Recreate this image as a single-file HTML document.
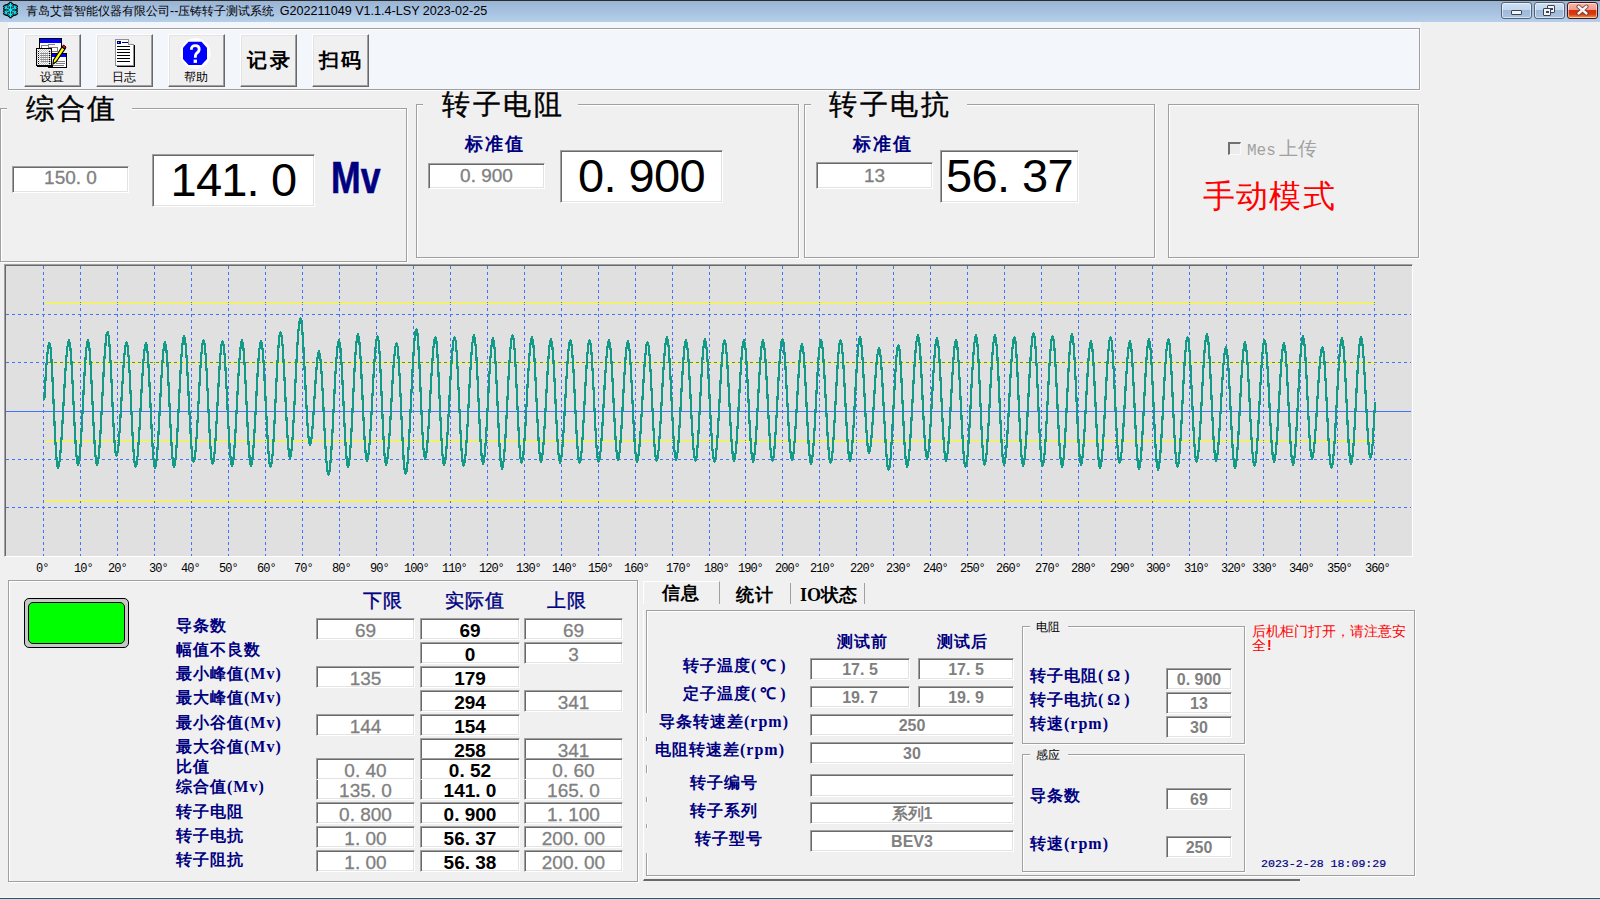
<!DOCTYPE html><html><head><meta charset="utf-8"><title>app</title><style>
*{margin:0;padding:0;box-sizing:border-box}
html,body{width:1600px;height:900px;overflow:hidden;background:#f0f0f0;font-family:"Liberation Sans",sans-serif;position:relative;color:#000}
.a{position:absolute;white-space:nowrap}
.grp{position:absolute;border:1px solid #a0a0a0;box-shadow:inset 1px 1px 0 #fff,1px 1px 0 #fff}
.ed{position:absolute;background:#fff;border-top:1px solid #a0a0a0;border-left:1px solid #a0a0a0;border-right:1px solid #fff;border-bottom:1px solid #fff;box-shadow:inset 1px 1px 0 #696969,inset -1px -1px 0 #e3e3e3;text-align:center;white-space:nowrap;overflow:hidden}
.btn{position:absolute;background:#f0f0f0;border-top:1px solid #fff;border-left:1px solid #fff;border-right:1px solid #696969;border-bottom:1px solid #696969;box-shadow:inset -1px -1px 0 #a0a0a0,inset 1px 1px 0 #e3e3e3}
.lbl{position:absolute;white-space:nowrap;color:#000080;font-weight:bold;font-size:16px;line-height:16px;letter-spacing:1px}
.gt{position:absolute;background:#f0f0f0;white-space:nowrap}
.gv{color:#808080;-webkit-text-stroke:0.3px #808080}
.bk{color:#000;font-weight:bold}
.sf{font-family:'Liberation Serif',serif}
</style></head><body>
<div class="a" style="left:0;top:0;width:1600px;height:22px;background:linear-gradient(#98b2d3,#a9c3e2 60%,#b6cfea)"></div>
<div class="a" style="left:0;top:0;width:1600px;height:1px;background:#2b2b2b"></div>
<svg class="a" style="left:0;top:0" width="22" height="22" viewBox="0 0 22 22">
<g fill="none" stroke="#000" stroke-width="2.5" stroke-linecap="square">
<path d="M10.5 3V17M4.4 6.5L16.6 13.5M4.4 13.5L16.6 6.5"/>
<path d="M8.5 4.5L10.5 6.5L12.5 4.5M8.5 15.5L10.5 13.5L12.5 15.5M4.5 9L6.5 8L6 5.5M16.5 9L14.5 8L15 5.5M4.5 11L6.5 12L6 14.5M16.5 11L14.5 12L15 14.5"/>
</g>
<g fill="none" stroke="#00f0ff" stroke-width="1.3">
<path d="M10.5 3V17M4.4 6.5L16.6 13.5M4.4 13.5L16.6 6.5"/>
<path d="M8.5 4.5L10.5 6.5L12.5 4.5M8.5 15.5L10.5 13.5L12.5 15.5M4.5 9L6.5 8L6 5.5M16.5 9L14.5 8L15 5.5M4.5 11L6.5 12L6 14.5M16.5 11L14.5 12L15 14.5"/>
</g>

</svg>
<div class="a" style="left:26px;top:4px;font-size:12.4px;line-height:14px;color:#000">青岛艾普智能仪器有限公司--压铸转子测试系统<span style="font-size:12.6px;padding-left:2px"> G202211049 V1.1.4-LSY 2023-02-25</span></div>
<div class="a" style="left:1501px;top:2px;width:31px;height:17px;border:1px solid #53627a;border-radius:3px;background:linear-gradient(#cfe0f3 0%,#c2d6ee 45%,#9fb9d8 50%,#a9c2e0 100%);box-shadow:inset 0 0 0 1px rgba(255,255,255,.55)"></div>
<div class="a" style="left:1534px;top:2px;width:31px;height:17px;border:1px solid #53627a;border-radius:3px;background:linear-gradient(#cfe0f3 0%,#c2d6ee 45%,#9fb9d8 50%,#a9c2e0 100%);box-shadow:inset 0 0 0 1px rgba(255,255,255,.55)"></div>
<div class="a" style="left:1567px;top:2px;width:31px;height:17px;border:1px solid #4a1018;border-radius:3px;background:linear-gradient(#f6b8a8 0%,#ee9a88 45%,#d8300c 50%,#d83a10 75%,#eaa050 100%);box-shadow:inset 0 0 0 1px rgba(255,255,255,.55)"></div>
<div class="a" style="left:1511px;top:10px;width:11px;height:5px;background:#f4f4f4;border:1px solid #3a4458;border-radius:1px"></div>
<div class="a" style="left:1547px;top:5px;width:8px;height:8px;border-radius:1px;background:#f4f4f4;border:1px solid #3a4458"><div style="margin:2px 0 0 2px;width:3px;height:2px;border:1px solid #3a4458"></div></div>
<div class="a" style="left:1543px;top:8px;width:8px;height:8px;border-radius:1px;background:#f4f4f4;border:1px solid #3a4458"><div style="margin:2px 0 0 2px;width:3px;height:2px;border:1px solid #3a4458"></div></div>
<svg class="a" style="left:1575px;top:4px" width="15" height="12" viewBox="0 0 15 12"><path d="M3.5 2.5L11.5 9.5M11.5 2.5L3.5 9.5" stroke="#6a3030" stroke-width="4" stroke-linecap="round"/><path d="M3.5 2.5L11.5 9.5M11.5 2.5L3.5 9.5" stroke="#f4f4f4" stroke-width="2.4" stroke-linecap="round"/></svg>
<div class="a" style="left:8px;top:22px;width:1413px;height:69px;background:#f3f6fb"></div>
<div class="grp" style="left:8px;top:28px;width:1412px;height:62px"></div>
<div class="btn" style="left:24px;top:34px;width:57px;height:53px"></div>
<div class="btn" style="left:96px;top:34px;width:57px;height:53px"></div>
<div class="btn" style="left:168px;top:34px;width:57px;height:53px"></div>
<div class="btn" style="left:240px;top:34px;width:57px;height:53px"></div>
<div class="btn" style="left:312px;top:34px;width:57px;height:53px"></div>
<svg class="a" style="left:36px;top:37px" width="32" height="32" viewBox="0 0 32 32" shape-rendering="crispEdges">
<rect x="3.5" y="1.5" width="22" height="15" fill="#fff" stroke="#000"/>
<rect x="4" y="2" width="21" height="4" fill="#0000ff"/>
<rect x="5.5" y="8.5" width="7" height="4" fill="none" stroke="#808080"/>
<rect x="12" y="7" width="7" height="1" fill="#808080"/><rect x="13.5" y="10.5" width="8" height="4" fill="none" stroke="#808080"/>
<rect x="12.5" y="16.5" width="18" height="14" fill="#fff" stroke="#000"/>
<rect x="13" y="17" width="17" height="3" fill="#0000ff"/>
<rect x="20" y="24" width="9" height="1" fill="#808080"/><rect x="20" y="26" width="9" height="1" fill="#808080"/><rect x="15" y="28" width="13" height="1" fill="#808080"/>
<rect x="1" y="28" width="16" height="2" fill="#000"/>
<defs><pattern id="chk" x="0" y="0" width="2" height="2" patternUnits="userSpaceOnUse"><rect width="2" height="2" fill="#fff"/><rect width="1" height="1" fill="#c0c0c0"/><rect x="1" y="1" width="1" height="1" fill="#c0c0c0"/></pattern></defs><rect x="0.5" y="11.5" width="15" height="17" fill="url(#chk)" stroke="#000"/>
<g fill="#000"><rect x="2" y="14" width="1" height="1"/><rect x="2" y="16" width="1" height="1"/><rect x="2" y="18" width="1" height="1"/><rect x="2" y="20" width="1" height="1"/><rect x="2" y="22" width="1" height="1"/><rect x="2" y="24" width="1" height="1"/><rect x="2" y="26" width="1" height="1"/>
<rect x="13" y="14" width="1" height="1"/><rect x="13" y="16" width="1" height="1"/><rect x="13" y="18" width="1" height="1"/><rect x="13" y="20" width="1" height="1"/><rect x="13" y="22" width="1" height="1"/><rect x="13" y="24" width="1" height="1"/><rect x="13" y="26" width="1" height="1"/></g>
<g fill="#909090"><rect x="4" y="16" width="8" height="1"/><rect x="4" y="18" width="8" height="1"/><rect x="4" y="20" width="8" height="1"/><rect x="4" y="22" width="8" height="1"/><rect x="5" y="24" width="7" height="1"/></g>
</svg>
<svg class="a" style="left:36px;top:37px" width="32" height="32" viewBox="0 0 32 32">
<path d="M26 10 L29 12 L20 25 L17 27 L17.5 23 Z" fill="#ffff00" stroke="#000" stroke-width="1.2"/>
<path d="M26 10 L29 12 L30 10 L27.5 8 Z" fill="#ff0000" stroke="#000" stroke-width="1"/>
</svg>
<div class="a" style="left:40px;top:71px;font-size:12px;line-height:13px">设置</div>
<svg class="a" style="left:114px;top:38px" width="22" height="30" viewBox="0 0 22 30" shape-rendering="crispEdges">
<path d="M3 29H21V8L20 7V28H3Z" fill="#000"/><rect x="19" y="7" width="2" height="22" fill="#000"/><rect x="3" y="27" width="18" height="2" fill="#000"/>
<path d="M1.5 1.5 H14.5 L19.5 6.5 V27.5 H1.5 Z" fill="#fff" stroke="#909090"/>
<path d="M14.5 1.5 V6.5 H19.5" fill="#e8e8e8" stroke="#909090"/>
<rect x="3" y="3" width="4" height="3" rx="1" fill="#000080"/><rect x="4" y="4" width="1" height="1" fill="#00ffff"/><rect x="8" y="4" width="6" height="1" fill="#000080"/>
<g fill="#000"><rect x="3" y="8" width="13" height="1"/><rect x="3" y="11" width="13" height="1"/><rect x="3" y="14" width="13" height="1"/><rect x="3" y="17" width="13" height="1"/><rect x="3" y="20" width="13" height="1"/><rect x="3" y="23" width="13" height="1"/></g>
</svg>
<div class="a" style="left:112px;top:71px;font-size:12px;line-height:13px">日志</div>
<svg class="a" style="left:180px;top:38px" width="31" height="31" viewBox="0 0 31 31">
<circle cx="15.5" cy="15.5" r="15.2" fill="#fff"/>
<path d="M8.5 3.8 H21.5 L27 9.8 V21 L21.5 27 H8.5 L3 21 V9.8 Z" fill="#0000ff"/>
<path d="M11.4 11.8 Q11.2 7.6 15.3 7.6 Q19.2 7.6 19.2 11 Q19.2 13.6 16.9 15 Q15.3 16 15.3 19.8" fill="none" stroke="#fff" stroke-width="2.8"/>
<rect x="13.6" y="21.6" width="3.4" height="3.3" fill="#fff"/>
</svg>
<div class="a" style="left:184px;top:71px;font-size:12px;line-height:13px">帮助</div>
<div class="a" style="left:247px;top:50px;font-size:20px;line-height:20px;font-weight:bold;letter-spacing:2.5px;font-family:'Liberation Serif',serif">记录</div>
<div class="a" style="left:319px;top:50px;font-size:20px;line-height:20px;font-weight:bold;letter-spacing:1.5px;font-family:'Liberation Serif',serif">扫码</div>
<div class="grp" style="left:0;top:108px;width:407px;height:154px"></div>
<div class="grp" style="left:416px;top:104px;width:383px;height:154px"></div>
<div class="grp" style="left:804px;top:104px;width:351px;height:154px"></div>
<div class="grp" style="left:1168px;top:104px;width:251px;height:154px"></div>
<div class="gt" style="left:7px;top:100px;width:125px;height:16px;"></div>
<div class="a" style="left:26px;top:94px;font-size:28px;line-height:30px;letter-spacing:2.5px;-webkit-text-stroke:0.4px #000">综合值</div>
<div class="gt" style="left:423px;top:96px;width:155px;height:16px;"></div>
<div class="a" style="left:442px;top:90px;font-size:28px;line-height:30px;letter-spacing:2.5px;-webkit-text-stroke:0.4px #000">转子电阻</div>
<div class="gt" style="left:811px;top:96px;width:156px;height:16px;"></div>
<div class="a" style="left:829px;top:90px;font-size:28px;line-height:30px;letter-spacing:2.6px;-webkit-text-stroke:0.4px #000">转子电抗</div>
<div class="ed gv" style="left:12px;top:166px;width:117px;height:27px;font-size:19px;line-height:21px">150.&nbsp;0</div>
<div class="ed" style="left:152px;top:154px;width:163px;height:53px;font-size:47px;line-height:50px;letter-spacing:-0.8px">141.&nbsp;0</div>
<div class="a" style="left:331px;top:156px;font-size:44px;line-height:44px;font-weight:bold;color:#000080;-webkit-text-stroke:0.6px #000080;transform:scaleX(0.81);transform-origin:0 0">Mv</div>
<div class="lbl" style="left:465px;top:135px;font-size:18px;line-height:18px;letter-spacing:2px">标准值</div>
<div class="ed gv" style="left:428px;top:163px;width:117px;height:26px;font-size:19px;line-height:24px">0.&nbsp;900</div>
<div class="ed" style="left:560px;top:150px;width:163px;height:53px;font-size:47px;line-height:50px;letter-spacing:-0.6px">0.&nbsp;900</div>
<div class="lbl" style="left:853px;top:135px;font-size:18px;line-height:18px;letter-spacing:2px">标准值</div>
<div class="ed gv" style="left:816px;top:162px;width:117px;height:27px;font-size:19px;line-height:25px">13</div>
<div class="ed" style="left:940px;top:150px;width:139px;height:53px;font-size:47px;line-height:50px;letter-spacing:-0.6px;text-align:left;padding-left:5px">56.&nbsp;37</div>
<div class="a" style="left:1228px;top:142px;width:13px;height:13px;border-top:2px solid #707070;border-left:2px solid #707070;border-right:1px solid #fafafa;border-bottom:1px solid #fafafa;background:#ececec"></div>
<div class="a" style="left:1247px;top:141px;font-size:16px;line-height:20px;color:#a0a0a0;font-family:'Liberation Mono',monospace">Mes<span style="font-size:18.5px;letter-spacing:0.5px;margin-left:3px">上传</span></div>
<div class="a" style="left:1203px;top:179px;font-size:32px;line-height:34px;letter-spacing:1.2px;color:#ff0000">手动模式</div>
<div class="a" style="left:4px;top:264px;width:1409px;height:293px;background:#e0e0e0;border-top:1px solid #a0a0a0;border-left:1px solid #a0a0a0;border-right:1px solid #fff;border-bottom:1px solid #fff;box-shadow:inset 1px 1px 0 #696969"></div>
<svg class="a" style="left:0;top:0" width="1600" height="900" viewBox="0 0 1600 900"><g stroke="#4173ff" stroke-width="1" shape-rendering="crispEdges" stroke-dasharray="3,3"><path d="M43.5 266V556"/><path d="M80.5 266V556"/><path d="M117.5 266V556"/><path d="M154.5 266V556"/><path d="M191.5 266V556"/><path d="M228.5 266V556"/><path d="M265.5 266V556"/><path d="M302.5 266V556"/><path d="M339.5 266V556"/><path d="M376.5 266V556"/><path d="M413.5 266V556"/><path d="M450.5 266V556"/><path d="M487.5 266V556"/><path d="M524.5 266V556"/><path d="M561.5 266V556"/><path d="M598.5 266V556"/><path d="M635.5 266V556"/><path d="M672.5 266V556"/><path d="M709.5 266V556"/><path d="M745.5 266V556"/><path d="M782.5 266V556"/><path d="M819.5 266V556"/><path d="M856.5 266V556"/><path d="M893.5 266V556"/><path d="M930.5 266V556"/><path d="M967.5 266V556"/><path d="M1004.5 266V556"/><path d="M1041.5 266V556"/><path d="M1078.5 266V556"/><path d="M1115.5 266V556"/><path d="M1152.5 266V556"/><path d="M1189.5 266V556"/><path d="M1226.5 266V556"/><path d="M1263.5 266V556"/><path d="M1300.5 266V556"/><path d="M1337.5 266V556"/><path d="M1374.5 266V556"/><path d="M6 314.5H1411"/><path d="M6 362.5H1411"/><path d="M6 459.5H1411"/><path d="M6 507.5H1411"/></g><path d="M6 411.5H1411" stroke="#4173ff" stroke-width="1" shape-rendering="crispEdges"/><g stroke="#ffff00" stroke-width="1" shape-rendering="crispEdges"><path d="M45 303.5H1375"/><path d="M45 363.5H1375"/><path d="M45 441.5H1375"/><path d="M45 500.5H1375"/></g><path d="M44.3,400.0 L45.3,382.4 L46.3,366.4 L47.4,353.8 L48.4,345.7 L49.4,342.9 L50.4,346.7 L51.3,357.5 L52.3,374.2 L53.2,394.6 L54.2,416.4 L55.1,436.8 L56.1,453.5 L57.0,464.3 L58.0,468.1 L59.0,465.5 L60.0,457.9 L61.0,446.0 L62.0,430.7 L63.0,413.3 L64.0,395.0 L65.0,377.6 L66.0,362.3 L67.0,350.4 L68.0,342.8 L69.0,340.2 L70.0,344.0 L71.0,354.8 L72.0,371.3 L73.0,391.7 L74.0,413.3 L75.0,433.6 L76.0,450.2 L77.0,461.0 L78.0,464.8 L79.0,461.8 L80.0,452.9 L81.0,439.1 L82.0,421.8 L83.0,402.5 L84.0,383.2 L85.0,365.9 L86.0,352.1 L87.0,343.2 L88.0,340.2 L89.0,344.0 L90.0,354.8 L91.0,371.3 L92.0,391.7 L93.0,413.3 L94.0,433.6 L95.0,450.2 L96.0,461.0 L97.0,464.8 L98.0,462.1 L98.9,454.3 L99.9,441.9 L100.9,426.0 L101.8,407.8 L102.8,388.9 L103.7,370.7 L104.7,354.8 L105.7,342.4 L106.6,334.6 L107.6,331.9 L108.6,335.6 L109.6,346.4 L110.6,362.9 L111.6,383.1 L112.5,404.6 L113.5,424.8 L114.5,441.3 L115.5,452.1 L116.5,455.8 L117.5,453.0 L118.5,445.0 L119.5,432.4 L120.5,416.6 L121.5,399.0 L122.6,381.4 L123.6,365.6 L124.6,353.0 L125.6,345.0 L126.6,342.2 L127.6,346.0 L128.6,356.8 L129.6,373.3 L130.6,393.7 L131.6,415.3 L132.6,435.6 L133.6,452.2 L134.6,463.0 L135.6,466.8 L136.6,463.8 L137.7,455.0 L138.7,441.2 L139.8,424.0 L140.8,404.8 L141.8,385.6 L142.9,368.4 L143.9,354.6 L145.0,345.8 L146.0,342.8 L147.0,346.6 L148.0,357.4 L149.0,374.1 L150.0,394.4 L151.0,416.2 L152.0,436.6 L153.0,453.2 L154.0,464.0 L155.0,467.8 L156.0,464.7 L157.0,455.8 L158.0,441.9 L159.0,424.4 L160.0,405.0 L161.0,385.6 L162.0,368.1 L163.0,354.2 L164.0,345.3 L165.0,342.2 L166.0,346.0 L167.0,356.8 L168.0,373.3 L169.0,393.7 L170.0,415.3 L171.0,435.6 L172.0,452.2 L173.0,463.0 L174.0,466.8 L175.0,463.6 L176.0,454.3 L177.0,439.9 L178.0,421.7 L179.0,401.5 L180.0,381.3 L181.0,363.1 L182.0,348.7 L183.0,339.4 L184.0,336.2 L185.0,339.3 L185.9,348.2 L186.9,362.1 L187.8,379.6 L188.8,399.0 L189.8,418.4 L190.7,435.9 L191.7,449.8 L192.6,458.7 L193.6,461.8 L194.6,458.8 L195.6,450.2 L196.6,436.7 L197.6,419.8 L198.6,401.0 L199.6,382.2 L200.6,365.3 L201.6,351.8 L202.6,343.2 L203.6,340.2 L204.6,343.9 L205.6,354.7 L206.6,371.1 L207.6,391.3 L208.6,412.7 L209.6,432.9 L210.6,449.3 L211.6,460.1 L212.6,463.8 L213.6,460.8 L214.6,452.1 L215.6,438.5 L216.6,421.4 L217.6,402.5 L218.6,383.6 L219.6,366.5 L220.6,352.9 L221.6,344.2 L222.6,341.2 L223.6,345.0 L224.7,355.8 L225.7,372.3 L226.8,392.7 L227.8,414.3 L228.9,434.6 L229.9,451.2 L231.0,462.0 L232.0,465.8 L233.0,462.7 L234.0,453.8 L235.0,439.9 L236.0,422.4 L237.0,403.0 L238.0,383.6 L239.0,366.1 L240.0,352.2 L241.0,343.3 L242.0,340.2 L243.0,344.0 L244.0,354.9 L245.0,371.6 L246.0,392.1 L247.0,413.9 L248.0,434.4 L249.0,451.1 L250.0,462.0 L251.0,465.8 L252.0,462.8 L253.0,453.9 L254.0,440.1 L255.0,422.8 L256.0,403.5 L257.0,384.2 L258.0,366.9 L259.0,353.1 L260.0,344.2 L261.0,341.2 L262.0,344.3 L262.9,353.2 L263.9,367.1 L264.8,384.6 L265.8,404.0 L266.8,423.4 L267.7,440.9 L268.7,454.8 L269.6,463.7 L270.6,466.8 L271.6,463.5 L272.6,453.9 L273.6,439.1 L274.6,420.3 L275.6,399.5 L276.6,378.7 L277.6,359.9 L278.6,345.1 L279.6,335.5 L280.6,332.2 L281.6,336.0 L282.7,346.9 L283.7,363.6 L284.8,384.1 L285.8,405.9 L286.9,426.4 L287.9,443.1 L289.0,454.0 L290.0,457.8 L291.0,454.4 L292.1,444.5 L293.1,429.0 L294.2,409.6 L295.2,388.0 L296.2,366.4 L297.3,347.0 L298.3,331.5 L299.4,321.6 L300.4,318.2 L301.4,321.3 L302.3,330.3 L303.3,344.3 L304.2,361.9 L305.2,381.5 L306.2,401.1 L307.1,418.7 L308.1,432.7 L309.0,441.7 L310.0,444.8 L311.0,442.0 L312.0,433.9 L313.0,421.4 L314.0,406.1 L315.0,389.9 L316.0,374.6 L317.0,362.1 L318.0,354.0 L319.0,351.2 L320.0,354.9 L321.1,365.7 L322.1,382.1 L323.2,402.3 L324.2,423.7 L325.3,443.9 L326.3,460.3 L327.4,471.1 L328.4,474.8 L329.4,472.1 L330.3,464.1 L331.3,451.6 L332.3,435.5 L333.2,417.1 L334.2,397.9 L335.1,379.5 L336.1,363.4 L337.1,350.9 L338.0,342.9 L339.0,340.2 L340.0,344.0 L341.0,355.0 L342.0,371.8 L343.0,392.5 L344.0,414.5 L345.0,435.1 L346.0,452.0 L347.0,463.0 L348.0,466.8 L349.0,463.6 L350.0,454.1 L351.0,439.5 L352.0,421.0 L353.0,400.5 L354.0,380.0 L355.0,361.5 L356.0,346.9 L357.0,337.4 L358.0,334.2 L359.0,338.0 L360.0,349.0 L361.0,365.8 L362.0,386.5 L363.0,408.5 L364.0,429.1 L365.0,446.0 L366.0,457.0 L367.0,460.8 L368.0,458.3 L368.9,450.9 L369.9,439.3 L370.9,424.4 L371.8,407.4 L372.8,389.6 L373.7,372.6 L374.7,357.7 L375.7,346.1 L376.6,338.7 L377.6,336.2 L378.7,341.1 L379.7,355.0 L380.8,375.9 L381.8,400.5 L382.9,425.1 L383.9,446.0 L384.9,459.9 L386.0,464.8 L387.0,462.3 L387.9,455.1 L388.9,443.8 L389.9,429.3 L390.8,412.7 L391.8,395.3 L392.7,378.7 L393.7,364.2 L394.7,352.9 L395.6,345.7 L396.6,343.2 L397.6,347.1 L398.6,358.5 L399.6,375.8 L400.6,397.2 L401.6,419.8 L402.6,441.1 L403.6,458.5 L404.6,469.9 L405.6,473.8 L406.6,470.9 L407.6,462.3 L408.5,448.8 L409.5,431.5 L410.5,411.8 L411.5,391.2 L412.5,371.5 L413.5,354.2 L414.4,340.7 L415.4,332.1 L416.4,329.2 L417.4,333.1 L418.3,344.4 L419.3,361.6 L420.2,382.7 L421.2,405.3 L422.1,426.4 L423.1,443.6 L424.0,454.9 L425.0,458.8 L426.0,455.8 L427.1,447.2 L428.1,433.7 L429.2,416.8 L430.2,398.0 L431.2,379.2 L432.3,362.3 L433.3,348.8 L434.4,340.2 L435.4,337.2 L436.4,341.0 L437.3,352.1 L438.3,369.1 L439.2,389.9 L440.2,412.1 L441.1,432.9 L442.1,449.9 L443.0,461.0 L444.0,464.8 L445.0,462.2 L445.9,454.7 L446.9,442.8 L447.9,427.5 L448.8,410.1 L449.8,391.9 L450.7,374.5 L451.7,359.2 L452.7,347.3 L453.6,339.8 L454.6,337.2 L455.6,341.1 L456.6,352.2 L457.6,369.3 L458.6,390.3 L459.6,412.7 L460.6,433.6 L461.6,450.8 L462.6,461.9 L463.6,465.8 L464.6,462.6 L465.7,453.3 L466.7,438.9 L467.8,420.7 L468.8,400.5 L469.8,380.3 L470.9,362.1 L471.9,347.7 L473.0,338.4 L474.0,335.2 L475.0,339.1 L476.0,350.2 L477.0,367.3 L478.0,388.3 L479.0,410.7 L480.0,431.6 L481.0,448.8 L482.0,459.9 L483.0,463.8 L484.0,460.7 L485.0,451.8 L486.0,437.9 L487.0,420.4 L488.0,401.0 L489.0,381.6 L490.0,364.1 L491.0,350.2 L492.0,341.3 L493.0,338.2 L494.0,342.1 L495.0,353.5 L496.0,370.8 L497.0,392.2 L498.0,414.8 L499.0,436.1 L500.0,453.5 L501.0,464.9 L502.0,468.8 L503.0,466.1 L503.9,458.2 L504.9,445.7 L505.9,429.7 L506.8,411.5 L507.8,392.5 L508.7,374.3 L509.7,358.3 L510.7,345.8 L511.6,337.9 L512.6,335.2 L513.6,339.0 L514.6,350.1 L515.6,367.1 L516.6,387.9 L517.6,410.1 L518.6,430.9 L519.6,447.9 L520.6,459.0 L521.6,462.8 L522.6,459.7 L523.7,450.8 L524.7,436.9 L525.8,419.4 L526.8,400.0 L527.8,380.6 L528.9,363.1 L529.9,349.2 L531.0,340.3 L532.0,337.2 L533.0,341.0 L534.0,351.8 L535.0,368.3 L536.0,388.7 L537.0,410.3 L538.0,430.6 L539.0,447.2 L540.0,458.0 L541.0,461.8 L542.0,458.8 L543.0,450.1 L544.0,436.5 L545.0,419.4 L546.0,400.5 L547.0,381.6 L548.0,364.5 L549.0,350.9 L550.0,342.2 L551.0,339.2 L552.0,342.9 L553.0,353.7 L554.0,370.1 L555.0,390.3 L556.0,411.7 L557.0,431.9 L558.0,448.3 L559.0,459.1 L560.0,462.8 L561.0,459.8 L562.1,451.1 L563.1,437.5 L564.2,420.4 L565.2,401.5 L566.2,382.6 L567.3,365.5 L568.3,351.9 L569.4,343.2 L570.4,340.2 L571.4,343.9 L572.4,354.5 L573.5,370.8 L574.5,390.9 L575.5,412.1 L576.5,432.1 L577.6,448.5 L578.6,459.1 L579.6,462.8 L580.6,459.8 L581.6,451.1 L582.6,437.5 L583.6,420.4 L584.6,401.5 L585.6,382.6 L586.6,365.5 L587.6,351.9 L588.6,343.2 L589.6,340.2 L590.6,343.9 L591.6,354.4 L592.6,370.6 L593.6,390.4 L594.6,411.6 L595.6,431.4 L596.6,447.6 L597.6,458.1 L598.6,461.8 L599.6,458.8 L600.7,450.2 L601.7,436.7 L602.8,419.8 L603.8,401.0 L604.8,382.2 L605.9,365.3 L606.9,351.8 L608.0,343.2 L609.0,340.2 L610.0,343.8 L611.0,354.2 L612.0,370.1 L613.0,389.6 L614.0,410.4 L615.0,429.9 L616.0,445.8 L617.0,456.2 L618.0,459.8 L619.0,456.9 L620.0,448.5 L621.0,435.4 L622.0,418.8 L623.0,400.5 L624.0,382.2 L625.0,365.6 L626.0,352.5 L627.0,344.1 L628.0,341.2 L629.0,344.8 L630.0,355.3 L631.0,371.3 L632.0,391.0 L633.0,412.0 L634.0,431.6 L635.0,447.7 L636.0,458.2 L637.0,461.8 L638.0,459.4 L638.9,452.3 L639.9,441.2 L640.9,426.8 L641.8,410.5 L642.8,393.5 L643.7,377.2 L644.7,362.8 L645.7,351.7 L646.6,344.6 L647.6,342.2 L648.6,345.8 L649.6,356.1 L650.6,371.8 L651.6,391.2 L652.6,411.8 L653.6,431.1 L654.6,446.9 L655.6,457.2 L656.6,460.8 L657.6,457.8 L658.7,449.0 L659.7,435.3 L660.8,418.1 L661.8,399.0 L662.8,379.9 L663.9,362.7 L664.9,349.0 L666.0,340.2 L667.0,337.2 L668.0,340.9 L669.0,351.5 L670.0,367.8 L671.0,387.9 L672.0,409.1 L673.0,429.1 L674.0,445.5 L675.0,456.1 L676.0,459.8 L677.0,456.9 L678.0,448.4 L679.0,435.1 L680.0,418.5 L681.0,400.0 L682.0,381.5 L683.0,364.9 L684.0,351.6 L685.0,343.1 L686.0,340.2 L687.0,343.8 L688.1,354.3 L689.1,370.3 L690.2,390.0 L691.2,411.0 L692.3,430.6 L693.3,446.7 L694.4,457.2 L695.4,460.8 L696.4,457.8 L697.3,449.2 L698.3,435.7 L699.2,418.8 L700.2,400.0 L701.2,381.2 L702.1,364.3 L703.1,350.8 L704.0,342.2 L705.0,339.2 L706.0,342.9 L707.1,353.5 L708.1,369.8 L709.2,389.9 L710.2,411.1 L711.3,431.1 L712.3,447.5 L713.4,458.1 L714.4,461.8 L715.4,458.8 L716.4,450.2 L717.5,436.7 L718.5,419.8 L719.5,401.0 L720.5,382.2 L721.5,365.3 L722.6,351.8 L723.6,343.2 L724.6,340.2 L725.6,343.8 L726.7,354.3 L727.7,370.3 L728.8,390.0 L729.8,411.0 L730.9,430.6 L731.9,446.7 L733.0,457.2 L734.0,460.8 L735.0,457.8 L736.0,449.3 L737.0,435.9 L738.0,419.1 L739.0,400.5 L740.0,381.9 L741.0,365.1 L742.0,351.7 L743.0,343.2 L744.0,340.2 L745.0,343.9 L746.0,354.4 L747.0,370.6 L748.0,390.4 L749.0,411.6 L750.0,431.4 L751.0,447.6 L752.0,458.1 L753.0,461.8 L754.0,458.8 L755.0,450.2 L756.0,436.7 L757.0,419.8 L758.0,401.0 L759.0,382.2 L760.0,365.3 L761.0,351.8 L762.0,343.2 L763.0,340.2 L764.0,343.8 L765.1,354.3 L766.1,370.3 L767.2,390.0 L768.2,411.0 L769.3,430.6 L770.3,446.7 L771.4,457.2 L772.4,460.8 L773.4,457.8 L774.4,449.2 L775.4,435.7 L776.4,418.8 L777.4,400.0 L778.4,381.2 L779.4,364.3 L780.4,350.8 L781.4,342.2 L782.4,339.2 L783.4,342.2 L784.3,350.7 L785.3,364.1 L786.2,380.9 L787.2,399.5 L788.2,418.1 L789.1,434.9 L790.1,448.3 L791.0,456.8 L792.0,459.8 L793.0,457.0 L794.0,448.8 L795.0,436.0 L796.0,419.9 L797.0,402.0 L798.0,384.1 L799.0,368.0 L800.0,355.2 L801.0,347.0 L802.0,344.2 L803.0,347.8 L804.0,358.2 L805.0,374.1 L806.0,393.6 L807.0,414.4 L808.0,433.9 L809.0,449.8 L810.0,460.2 L811.0,463.8 L812.0,460.8 L813.0,452.0 L814.0,438.3 L815.0,421.1 L816.0,402.0 L817.0,382.9 L818.0,365.7 L819.0,352.0 L820.0,343.2 L821.0,340.2 L822.0,343.2 L822.9,351.9 L823.9,365.5 L824.8,382.6 L825.8,401.5 L826.8,420.4 L827.7,437.5 L828.7,451.1 L829.6,459.8 L830.6,462.8 L831.6,459.8 L832.6,451.1 L833.6,437.5 L834.6,420.4 L835.6,401.5 L836.6,382.6 L837.6,365.5 L838.6,351.9 L839.6,343.2 L840.6,340.2 L841.6,343.8 L842.7,354.3 L843.7,370.3 L844.8,390.0 L845.8,411.0 L846.9,430.6 L847.9,446.7 L849.0,457.2 L850.0,460.8 L851.0,457.8 L852.0,449.0 L853.0,435.3 L854.0,418.1 L855.0,399.0 L856.0,379.9 L857.0,362.7 L858.0,349.0 L859.0,340.2 L860.0,337.2 L861.0,340.7 L862.0,350.7 L863.0,366.1 L864.0,385.0 L865.0,405.0 L866.0,423.9 L867.0,439.3 L868.0,449.3 L869.0,452.8 L870.0,450.2 L871.0,442.8 L872.0,431.2 L873.0,416.7 L874.0,400.5 L875.0,384.3 L876.0,369.8 L877.0,358.2 L878.0,350.8 L879.0,348.2 L880.0,351.2 L880.9,359.8 L881.9,373.3 L882.8,390.2 L883.8,409.0 L884.8,427.8 L885.7,444.7 L886.7,458.2 L887.6,466.8 L888.6,469.8 L889.6,466.8 L890.6,457.9 L891.5,444.1 L892.5,426.8 L893.5,407.5 L894.5,388.2 L895.5,370.9 L896.4,357.1 L897.4,348.2 L898.4,345.2 L899.4,348.9 L900.3,359.4 L901.3,375.6 L902.2,395.4 L903.2,416.6 L904.1,436.4 L905.1,452.6 L906.0,463.1 L907.0,466.8 L908.0,464.1 L909.0,456.4 L910.0,444.1 L911.0,428.3 L912.0,410.4 L913.0,391.6 L914.0,373.7 L915.0,357.9 L916.0,345.6 L917.0,337.9 L918.0,335.2 L919.0,338.9 L920.0,349.7 L921.0,366.1 L922.0,386.3 L923.0,407.7 L924.0,427.9 L925.0,444.3 L926.0,455.1 L927.0,458.8 L928.0,455.8 L929.0,447.3 L930.0,433.9 L931.0,417.1 L932.0,398.5 L933.0,379.9 L934.0,363.1 L935.0,349.7 L936.0,341.2 L937.0,338.2 L938.0,341.9 L939.0,352.5 L940.0,368.8 L941.0,388.9 L942.0,410.1 L943.0,430.1 L944.0,446.5 L945.0,457.1 L946.0,460.8 L947.0,457.8 L948.0,449.3 L949.0,435.9 L950.0,419.1 L951.0,400.5 L952.0,381.9 L953.0,365.1 L954.0,351.7 L955.0,343.2 L956.0,340.2 L957.0,343.3 L957.9,352.3 L958.9,366.3 L959.8,383.9 L960.8,403.5 L961.8,423.1 L962.7,440.7 L963.7,454.7 L964.6,463.7 L965.6,466.8 L966.6,463.6 L967.7,454.2 L968.7,439.7 L969.8,421.3 L970.8,401.0 L971.8,380.7 L972.9,362.3 L973.9,347.8 L975.0,338.4 L976.0,335.2 L977.0,339.1 L977.9,350.4 L978.9,367.6 L979.8,388.7 L980.8,411.3 L981.7,432.4 L982.7,449.6 L983.6,460.9 L984.6,464.8 L985.6,461.6 L986.7,452.4 L987.7,438.1 L988.8,420.0 L989.8,400.0 L990.8,380.0 L991.9,361.9 L992.9,347.6 L994.0,338.4 L995.0,335.2 L996.0,339.1 L997.0,350.4 L998.0,367.6 L999.0,388.7 L1000.0,411.3 L1001.0,432.4 L1002.0,449.6 L1003.0,460.9 L1004.0,464.8 L1005.0,461.7 L1006.1,452.6 L1007.1,438.5 L1008.2,420.7 L1009.2,401.0 L1010.2,381.3 L1011.3,363.5 L1012.3,349.4 L1013.4,340.3 L1014.4,337.2 L1015.4,341.1 L1016.3,352.2 L1017.3,369.3 L1018.2,390.3 L1019.2,412.7 L1020.1,433.6 L1021.1,450.8 L1022.0,461.9 L1023.0,465.8 L1024.0,463.1 L1024.9,455.3 L1025.9,442.9 L1026.9,427.0 L1027.8,408.9 L1028.8,390.1 L1029.7,372.0 L1030.7,356.1 L1031.7,343.7 L1032.6,335.9 L1033.6,333.2 L1034.6,337.2 L1035.6,348.7 L1036.6,366.3 L1037.6,388.0 L1038.6,411.0 L1039.6,432.6 L1040.6,450.3 L1041.6,461.8 L1042.6,465.8 L1043.6,462.6 L1044.6,453.4 L1045.6,439.1 L1046.6,421.0 L1047.6,401.0 L1048.6,381.0 L1049.6,362.9 L1050.6,348.6 L1051.6,339.4 L1052.6,336.2 L1053.6,340.1 L1054.7,351.5 L1055.7,368.8 L1056.8,390.2 L1057.8,412.8 L1058.9,434.1 L1059.9,451.5 L1061.0,462.9 L1062.0,466.8 L1063.0,463.6 L1064.0,454.1 L1065.0,439.5 L1066.0,421.0 L1067.0,400.5 L1068.0,380.0 L1069.0,361.5 L1070.0,346.9 L1071.0,337.4 L1072.0,334.2 L1073.0,338.1 L1074.0,349.5 L1075.0,366.8 L1076.0,388.2 L1077.0,410.8 L1078.0,432.1 L1079.0,449.5 L1080.0,460.9 L1081.0,464.8 L1082.0,461.8 L1083.0,453.0 L1084.0,439.3 L1085.0,422.1 L1086.0,403.0 L1087.0,383.9 L1088.0,366.7 L1089.0,353.0 L1090.0,344.2 L1091.0,341.2 L1092.0,345.0 L1093.0,356.0 L1094.0,372.8 L1095.0,393.5 L1096.0,415.5 L1097.0,436.1 L1098.0,453.0 L1099.0,464.0 L1100.0,467.8 L1101.0,465.2 L1101.9,457.4 L1102.9,445.3 L1103.9,429.6 L1104.8,411.8 L1105.8,393.2 L1106.7,375.4 L1107.7,359.7 L1108.7,347.6 L1109.6,339.8 L1110.6,337.2 L1111.6,341.0 L1112.6,351.9 L1113.6,368.6 L1114.6,389.1 L1115.6,410.9 L1116.6,431.4 L1117.6,448.1 L1118.6,459.0 L1119.6,462.8 L1120.6,459.8 L1121.7,451.2 L1122.7,437.7 L1123.8,420.8 L1124.8,402.0 L1125.8,383.2 L1126.9,366.3 L1127.9,352.8 L1129.0,344.2 L1130.0,341.2 L1131.0,345.0 L1132.0,356.1 L1133.0,373.1 L1134.0,393.9 L1135.0,416.1 L1136.0,436.9 L1137.0,453.9 L1138.0,465.0 L1139.0,468.8 L1140.0,465.6 L1141.0,456.4 L1142.0,442.1 L1143.0,424.0 L1144.0,404.0 L1145.0,384.0 L1146.0,365.9 L1147.0,351.6 L1148.0,342.4 L1149.0,339.2 L1150.0,343.1 L1151.0,354.5 L1152.0,371.8 L1153.0,393.2 L1154.0,415.8 L1155.0,437.1 L1156.0,454.5 L1157.0,465.9 L1158.0,469.8 L1159.0,466.6 L1160.1,457.3 L1161.1,442.9 L1162.2,424.7 L1163.2,404.5 L1164.2,384.3 L1165.3,366.1 L1166.3,351.7 L1167.4,342.4 L1168.4,339.2 L1169.4,343.0 L1170.4,354.1 L1171.4,371.1 L1172.4,391.9 L1173.4,414.1 L1174.4,434.9 L1175.4,451.9 L1176.4,463.0 L1177.4,466.8 L1178.4,463.6 L1179.4,454.4 L1180.5,440.1 L1181.5,422.0 L1182.5,402.0 L1183.5,382.0 L1184.5,363.9 L1185.6,349.6 L1186.6,340.4 L1187.6,337.2 L1188.6,341.0 L1189.6,351.8 L1190.6,368.3 L1191.6,388.7 L1192.6,410.3 L1193.6,430.6 L1194.6,447.2 L1195.6,458.0 L1196.6,461.8 L1197.6,458.7 L1198.7,449.6 L1199.7,435.5 L1200.8,417.7 L1201.8,398.0 L1202.8,378.3 L1203.9,360.5 L1204.9,346.4 L1206.0,337.3 L1207.0,334.2 L1208.0,338.0 L1209.0,349.0 L1210.0,365.8 L1211.0,386.5 L1212.0,408.5 L1213.0,429.1 L1214.0,446.0 L1215.0,457.0 L1216.0,460.8 L1217.0,458.0 L1218.0,450.0 L1219.0,437.4 L1220.0,421.6 L1221.0,404.0 L1222.0,386.4 L1223.0,370.6 L1224.0,358.0 L1225.0,350.0 L1226.0,347.2 L1227.0,350.8 L1228.0,361.3 L1229.0,377.3 L1230.0,397.0 L1231.0,418.0 L1232.0,437.6 L1233.0,453.7 L1234.0,464.2 L1235.0,467.8 L1236.0,464.7 L1237.0,455.8 L1238.0,441.9 L1239.0,424.4 L1240.0,405.0 L1241.0,385.6 L1242.0,368.1 L1243.0,354.2 L1244.0,345.3 L1245.0,342.2 L1246.0,345.9 L1247.1,356.7 L1248.1,373.1 L1249.2,393.3 L1250.2,414.7 L1251.3,434.9 L1252.3,451.3 L1253.4,462.1 L1254.4,465.8 L1255.4,462.7 L1256.4,453.8 L1257.5,439.9 L1258.5,422.4 L1259.5,403.0 L1260.5,383.6 L1261.5,366.1 L1262.6,352.2 L1263.6,343.3 L1264.6,340.2 L1265.6,343.9 L1266.7,354.4 L1267.7,370.6 L1268.8,390.4 L1269.8,411.6 L1270.9,431.4 L1271.9,447.6 L1273.0,458.1 L1274.0,461.8 L1275.0,458.9 L1276.0,450.5 L1277.0,437.4 L1278.0,420.8 L1279.0,402.5 L1280.0,384.2 L1281.0,367.6 L1282.0,354.5 L1283.0,346.1 L1284.0,343.2 L1285.0,346.9 L1286.0,357.4 L1287.0,373.6 L1288.0,393.4 L1289.0,414.6 L1290.0,434.4 L1291.0,450.6 L1292.0,461.1 L1293.0,464.8 L1294.0,461.7 L1295.0,452.5 L1296.0,438.3 L1297.0,420.4 L1298.0,400.5 L1299.0,380.6 L1300.0,362.7 L1301.0,348.5 L1302.0,339.3 L1303.0,336.2 L1304.0,339.9 L1305.0,350.5 L1306.0,366.8 L1307.0,386.9 L1308.0,408.1 L1309.0,428.1 L1310.0,444.5 L1311.0,455.1 L1312.0,458.8 L1313.0,456.1 L1314.1,448.1 L1315.1,435.8 L1316.2,420.2 L1317.2,403.0 L1318.2,385.8 L1319.3,370.2 L1320.3,357.9 L1321.4,349.9 L1322.4,347.2 L1323.4,350.8 L1324.4,361.3 L1325.4,377.3 L1326.4,397.0 L1327.4,418.0 L1328.4,437.6 L1329.4,453.7 L1330.4,464.2 L1331.4,467.8 L1332.4,465.2 L1333.3,457.5 L1334.3,445.4 L1335.3,429.9 L1336.2,412.2 L1337.2,393.8 L1338.1,376.1 L1339.1,360.6 L1340.1,348.5 L1341.0,340.8 L1342.0,338.2 L1343.0,342.0 L1344.0,352.9 L1345.0,369.6 L1346.0,390.1 L1347.0,411.9 L1348.0,432.4 L1349.0,449.1 L1350.0,460.0 L1351.0,463.8 L1352.0,460.7 L1353.0,451.7 L1354.0,437.7 L1355.0,420.1 L1356.0,400.5 L1357.0,380.9 L1358.0,363.3 L1359.0,349.3 L1360.0,340.3 L1361.0,337.2 L1362.0,340.2 L1362.9,348.7 L1363.9,362.1 L1364.8,378.9 L1365.8,397.5 L1366.8,416.1 L1367.7,432.9 L1368.7,446.3 L1369.6,454.8 L1370.6,457.8 L1371.7,453.6 L1372.8,441.5 L1373.9,423.4 L1375.0,402.0" fill="none" stroke="#149b87" stroke-width="2.2" stroke-linejoin="round" shape-rendering="crispEdges"/></svg>
<div class="a" style="left:36px;top:563px;font-size:12px;line-height:13px;font-family:'Liberation Mono',monospace;letter-spacing:-1px">0°</div>
<div class="a" style="left:74px;top:563px;font-size:12px;line-height:13px;font-family:'Liberation Mono',monospace;letter-spacing:-1px">10°</div>
<div class="a" style="left:108px;top:563px;font-size:12px;line-height:13px;font-family:'Liberation Mono',monospace;letter-spacing:-1px">20°</div>
<div class="a" style="left:149px;top:563px;font-size:12px;line-height:13px;font-family:'Liberation Mono',monospace;letter-spacing:-1px">30°</div>
<div class="a" style="left:181px;top:563px;font-size:12px;line-height:13px;font-family:'Liberation Mono',monospace;letter-spacing:-1px">40°</div>
<div class="a" style="left:219px;top:563px;font-size:12px;line-height:13px;font-family:'Liberation Mono',monospace;letter-spacing:-1px">50°</div>
<div class="a" style="left:257px;top:563px;font-size:12px;line-height:13px;font-family:'Liberation Mono',monospace;letter-spacing:-1px">60°</div>
<div class="a" style="left:294px;top:563px;font-size:12px;line-height:13px;font-family:'Liberation Mono',monospace;letter-spacing:-1px">70°</div>
<div class="a" style="left:332px;top:563px;font-size:12px;line-height:13px;font-family:'Liberation Mono',monospace;letter-spacing:-1px">80°</div>
<div class="a" style="left:370px;top:563px;font-size:12px;line-height:13px;font-family:'Liberation Mono',monospace;letter-spacing:-1px">90°</div>
<div class="a" style="left:404px;top:563px;font-size:12px;line-height:13px;font-family:'Liberation Mono',monospace;letter-spacing:-1px">100°</div>
<div class="a" style="left:442px;top:563px;font-size:12px;line-height:13px;font-family:'Liberation Mono',monospace;letter-spacing:-1px">110°</div>
<div class="a" style="left:479px;top:563px;font-size:12px;line-height:13px;font-family:'Liberation Mono',monospace;letter-spacing:-1px">120°</div>
<div class="a" style="left:516px;top:563px;font-size:12px;line-height:13px;font-family:'Liberation Mono',monospace;letter-spacing:-1px">130°</div>
<div class="a" style="left:552px;top:563px;font-size:12px;line-height:13px;font-family:'Liberation Mono',monospace;letter-spacing:-1px">140°</div>
<div class="a" style="left:588px;top:563px;font-size:12px;line-height:13px;font-family:'Liberation Mono',monospace;letter-spacing:-1px">150°</div>
<div class="a" style="left:624px;top:563px;font-size:12px;line-height:13px;font-family:'Liberation Mono',monospace;letter-spacing:-1px">160°</div>
<div class="a" style="left:666px;top:563px;font-size:12px;line-height:13px;font-family:'Liberation Mono',monospace;letter-spacing:-1px">170°</div>
<div class="a" style="left:704px;top:563px;font-size:12px;line-height:13px;font-family:'Liberation Mono',monospace;letter-spacing:-1px">180°</div>
<div class="a" style="left:738px;top:563px;font-size:12px;line-height:13px;font-family:'Liberation Mono',monospace;letter-spacing:-1px">190°</div>
<div class="a" style="left:775px;top:563px;font-size:12px;line-height:13px;font-family:'Liberation Mono',monospace;letter-spacing:-1px">200°</div>
<div class="a" style="left:810px;top:563px;font-size:12px;line-height:13px;font-family:'Liberation Mono',monospace;letter-spacing:-1px">210°</div>
<div class="a" style="left:850px;top:563px;font-size:12px;line-height:13px;font-family:'Liberation Mono',monospace;letter-spacing:-1px">220°</div>
<div class="a" style="left:886px;top:563px;font-size:12px;line-height:13px;font-family:'Liberation Mono',monospace;letter-spacing:-1px">230°</div>
<div class="a" style="left:923px;top:563px;font-size:12px;line-height:13px;font-family:'Liberation Mono',monospace;letter-spacing:-1px">240°</div>
<div class="a" style="left:960px;top:563px;font-size:12px;line-height:13px;font-family:'Liberation Mono',monospace;letter-spacing:-1px">250°</div>
<div class="a" style="left:996px;top:563px;font-size:12px;line-height:13px;font-family:'Liberation Mono',monospace;letter-spacing:-1px">260°</div>
<div class="a" style="left:1035px;top:563px;font-size:12px;line-height:13px;font-family:'Liberation Mono',monospace;letter-spacing:-1px">270°</div>
<div class="a" style="left:1071px;top:563px;font-size:12px;line-height:13px;font-family:'Liberation Mono',monospace;letter-spacing:-1px">280°</div>
<div class="a" style="left:1110px;top:563px;font-size:12px;line-height:13px;font-family:'Liberation Mono',monospace;letter-spacing:-1px">290°</div>
<div class="a" style="left:1146px;top:563px;font-size:12px;line-height:13px;font-family:'Liberation Mono',monospace;letter-spacing:-1px">300°</div>
<div class="a" style="left:1184px;top:563px;font-size:12px;line-height:13px;font-family:'Liberation Mono',monospace;letter-spacing:-1px">310°</div>
<div class="a" style="left:1221px;top:563px;font-size:12px;line-height:13px;font-family:'Liberation Mono',monospace;letter-spacing:-1px">320°</div>
<div class="a" style="left:1252px;top:563px;font-size:12px;line-height:13px;font-family:'Liberation Mono',monospace;letter-spacing:-1px">330°</div>
<div class="a" style="left:1289px;top:563px;font-size:12px;line-height:13px;font-family:'Liberation Mono',monospace;letter-spacing:-1px">340°</div>
<div class="a" style="left:1327px;top:563px;font-size:12px;line-height:13px;font-family:'Liberation Mono',monospace;letter-spacing:-1px">350°</div>
<div class="a" style="left:1365px;top:563px;font-size:12px;line-height:13px;font-family:'Liberation Mono',monospace;letter-spacing:-1px">360°</div>
<div class="grp" style="left:8px;top:580px;width:630px;height:302px"></div>
<div class="a" style="left:24px;top:598px;width:105px;height:50px;border:1px solid #000;border-radius:5px;background:#c8c8c8;padding:3px"><div style="width:97px;height:42px;border:1px solid #000;border-radius:5px;background:#00ff00"></div></div>
<div class="lbl" style="left:363px;top:591px;font-size:19px;line-height:19px;font-weight:normal;-webkit-text-stroke:0.4px #000080">下限</div>
<div class="lbl" style="left:445px;top:591px;font-size:19px;line-height:19px;font-weight:normal;-webkit-text-stroke:0.4px #000080">实际值</div>
<div class="lbl" style="left:547px;top:591px;font-size:19px;line-height:19px;font-weight:normal;-webkit-text-stroke:0.4px #000080">上限</div>
<div class="lbl" style="left:176px;top:618px">导条数</div>
<div class="ed gv" style="left:316px;top:618px;width:99px;height:22px;font-size:19px;line-height:23px">69</div>
<div class="ed bk" style="left:420px;top:618px;width:100px;height:22px;font-size:19px;line-height:23px">69</div>
<div class="ed gv" style="left:524px;top:618px;width:99px;height:22px;font-size:19px;line-height:23px">69</div>
<div class="lbl" style="left:176px;top:642px">幅值不良数</div>
<div class="ed bk" style="left:420px;top:642px;width:100px;height:22px;font-size:19px;line-height:23px">0</div>
<div class="ed gv" style="left:524px;top:642px;width:99px;height:22px;font-size:19px;line-height:23px">3</div>
<div class="lbl" style="left:176px;top:666px">最小峰值<span class="sf">(Mv)</span></div>
<div class="ed gv" style="left:316px;top:666px;width:99px;height:22px;font-size:19px;line-height:23px">135</div>
<div class="ed bk" style="left:420px;top:666px;width:100px;height:22px;font-size:19px;line-height:23px">179</div>
<div class="lbl" style="left:176px;top:690px">最大峰值<span class="sf">(Mv)</span></div>
<div class="ed bk" style="left:420px;top:690px;width:100px;height:22px;font-size:19px;line-height:23px">294</div>
<div class="ed gv" style="left:524px;top:690px;width:99px;height:22px;font-size:19px;line-height:23px">341</div>
<div class="lbl" style="left:176px;top:715px">最小谷值<span class="sf">(Mv)</span></div>
<div class="ed gv" style="left:316px;top:714px;width:99px;height:22px;font-size:19px;line-height:23px">144</div>
<div class="ed bk" style="left:420px;top:714px;width:100px;height:22px;font-size:19px;line-height:23px">154</div>
<div class="lbl" style="left:176px;top:739px">最大谷值<span class="sf">(Mv)</span></div>
<div class="ed bk" style="left:420px;top:738px;width:100px;height:22px;font-size:19px;line-height:23px">258</div>
<div class="ed gv" style="left:524px;top:738px;width:99px;height:22px;font-size:19px;line-height:23px">341</div>
<div class="lbl" style="left:176px;top:779px">综合值<span class="sf">(Mv)</span></div>
<div class="ed gv" style="left:316px;top:778px;width:99px;height:22px;font-size:19px;line-height:23px">135.&nbsp;0</div>
<div class="ed bk" style="left:420px;top:778px;width:100px;height:22px;font-size:19px;line-height:23px">141.&nbsp;0</div>
<div class="ed gv" style="left:524px;top:778px;width:99px;height:22px;font-size:19px;line-height:23px">165.&nbsp;0</div>
<div class="lbl" style="left:176px;top:759px">比值</div>
<div class="ed gv" style="left:316px;top:758px;width:99px;height:22px;font-size:19px;line-height:23px">0.&nbsp;40</div>
<div class="ed bk" style="left:420px;top:758px;width:100px;height:22px;font-size:19px;line-height:23px">0.&nbsp;52</div>
<div class="ed gv" style="left:524px;top:758px;width:99px;height:22px;font-size:19px;line-height:23px">0.&nbsp;60</div>
<div class="lbl" style="left:176px;top:804px">转子电阻</div>
<div class="ed gv" style="left:316px;top:802px;width:99px;height:22px;font-size:19px;line-height:23px">0.&nbsp;800</div>
<div class="ed bk" style="left:420px;top:802px;width:100px;height:22px;font-size:19px;line-height:23px">0.&nbsp;900</div>
<div class="ed gv" style="left:524px;top:802px;width:99px;height:22px;font-size:19px;line-height:23px">1.&nbsp;100</div>
<div class="lbl" style="left:176px;top:828px">转子电抗</div>
<div class="ed gv" style="left:316px;top:826px;width:99px;height:22px;font-size:19px;line-height:23px">1.&nbsp;00</div>
<div class="ed bk" style="left:420px;top:826px;width:100px;height:22px;font-size:19px;line-height:23px">56.&nbsp;37</div>
<div class="ed gv" style="left:524px;top:826px;width:99px;height:22px;font-size:19px;line-height:23px">200.&nbsp;00</div>
<div class="lbl" style="left:176px;top:852px">转子阻抗</div>
<div class="ed gv" style="left:316px;top:850px;width:99px;height:22px;font-size:19px;line-height:23px">1.&nbsp;00</div>
<div class="ed bk" style="left:420px;top:850px;width:100px;height:22px;font-size:19px;line-height:23px">56.&nbsp;38</div>
<div class="ed gv" style="left:524px;top:850px;width:99px;height:22px;font-size:19px;line-height:23px">200.&nbsp;00</div>
<div class="a" style="left:643px;top:610px;width:657px;height:271px;border-left:1px solid #fff;border-bottom:2px solid #696969"></div>
<div class="a" style="left:643px;top:581px;width:77px;height:23px;border-top:1px solid #fff;border-left:1px solid #fff;border-right:1px solid #a0a0a0"></div>
<div class="a" style="left:719px;top:583px;width:72px;height:21px;border-right:1px solid #a0a0a0"></div>
<div class="a" style="left:791px;top:583px;width:74px;height:21px;border-right:1px solid #a0a0a0"></div>
<div class="a" style="left:662px;top:583px;font-size:18px;line-height:20px;font-weight:bold;font-family:'Liberation Serif',serif;letter-spacing:1px">信息</div>
<div class="a" style="left:736px;top:585px;font-size:18px;line-height:20px;font-weight:bold;font-family:'Liberation Serif',serif;letter-spacing:1px">统计</div>
<div class="a" style="left:800px;top:585px;font-size:18px;line-height:20px;font-weight:bold;font-family:'Liberation Serif',serif">IO状态</div>
<div class="grp" style="left:646px;top:610px;width:769px;height:266px"></div>
<div class="gt" style="left:645px;top:713px;width:6px;height:24px"></div>
<div class="gt" style="left:645px;top:741px;width:6px;height:24px"></div>
<div class="gt" style="left:645px;top:773px;width:6px;height:24px"></div>
<div class="gt" style="left:645px;top:802px;width:6px;height:22px"></div>
<div class="gt" style="left:645px;top:828px;width:6px;height:25px"></div>
<div class="lbl" style="left:837px;top:634px">测试前</div>
<div class="lbl" style="left:937px;top:634px">测试后</div>
<div class="lbl" style="left:683px;top:658px">转子温度<span class="sf" style="letter-spacing:4px">(℃</span><span class="sf">)</span></div>
<div class="lbl" style="left:683px;top:686px">定子温度<span class="sf" style="letter-spacing:4px">(℃</span><span class="sf">)</span></div>
<div class="lbl" style="left:659px;top:714px">导条转速差<span class="sf">(rpm)</span></div>
<div class="lbl" style="left:655px;top:742px">电阻转速差<span class="sf">(rpm)</span></div>
<div class="lbl" style="left:690px;top:775px">转子编号</div>
<div class="lbl" style="left:690px;top:803px">转子系列</div>
<div class="lbl" style="left:695px;top:831px">转子型号</div>
<div class="ed gv" style="left:810px;top:658px;width:100px;height:22px;font-size:16px;line-height:21px;font-weight:bold;-webkit-text-stroke:0">17.&nbsp;5</div>
<div class="ed gv" style="left:918px;top:658px;width:96px;height:22px;font-size:16px;line-height:21px;font-weight:bold;-webkit-text-stroke:0">17.&nbsp;5</div>
<div class="ed gv" style="left:810px;top:686px;width:100px;height:22px;font-size:16px;line-height:21px;font-weight:bold;-webkit-text-stroke:0">19.&nbsp;7</div>
<div class="ed gv" style="left:918px;top:686px;width:96px;height:22px;font-size:16px;line-height:21px;font-weight:bold;-webkit-text-stroke:0">19.&nbsp;9</div>
<div class="ed gv" style="left:810px;top:714px;width:204px;height:22px;font-size:16px;line-height:21px;font-weight:bold;-webkit-text-stroke:0">250</div>
<div class="ed gv" style="left:810px;top:742px;width:204px;height:22px;font-size:16px;line-height:21px;font-weight:bold;-webkit-text-stroke:0">30</div>
<div class="ed gv" style="left:810px;top:774px;width:204px;height:23px;font-size:16px;line-height:22px;font-weight:bold;-webkit-text-stroke:0"></div>
<div class="ed gv" style="left:810px;top:802px;width:204px;height:22px;font-size:16px;line-height:21px;font-weight:bold;-webkit-text-stroke:0">系列1</div>
<div class="ed gv" style="left:810px;top:830px;width:204px;height:22px;font-size:16px;line-height:21px;font-weight:bold;-webkit-text-stroke:0">BEV3</div>
<div class="grp" style="left:1022px;top:626px;width:223px;height:118px"></div>
<div class="gt" style="left:1030px;top:618px;width:38px;height:16px"></div>
<div class="a" style="left:1036px;top:620px;font-size:12px;line-height:14px">电阻</div>
<div class="grp" style="left:1022px;top:754px;width:223px;height:118px"></div>
<div class="gt" style="left:1030px;top:746px;width:38px;height:16px"></div>
<div class="a" style="left:1036px;top:748px;font-size:12px;line-height:14px">感应</div>
<div class="lbl" style="left:1030px;top:668px">转子电阻<span class="sf" style="letter-spacing:4px">(Ω</span><span class="sf">)</span></div>
<div class="lbl" style="left:1030px;top:692px">转子电抗<span class="sf" style="letter-spacing:4px">(Ω</span><span class="sf">)</span></div>
<div class="lbl" style="left:1030px;top:716px">转速<span class="sf">(rpm)</span></div>
<div class="ed gv" style="left:1166px;top:668px;width:66px;height:22px;font-size:16px;line-height:21px;font-weight:bold;-webkit-text-stroke:0">0.&nbsp;900</div>
<div class="ed gv" style="left:1166px;top:692px;width:66px;height:22px;font-size:16px;line-height:21px;font-weight:bold;-webkit-text-stroke:0">13</div>
<div class="ed gv" style="left:1166px;top:716px;width:66px;height:22px;font-size:16px;line-height:21px;font-weight:bold;-webkit-text-stroke:0">30</div>
<div class="lbl" style="left:1030px;top:788px">导条数</div>
<div class="lbl" style="left:1030px;top:836px">转速<span class="sf">(rpm)</span></div>
<div class="ed gv" style="left:1166px;top:788px;width:66px;height:22px;font-size:16px;line-height:21px;font-weight:bold;-webkit-text-stroke:0">69</div>
<div class="ed gv" style="left:1166px;top:836px;width:66px;height:22px;font-size:16px;line-height:21px;font-weight:bold;-webkit-text-stroke:0">250</div>
<div class="a" style="left:1252px;top:624px;width:160px;white-space:normal;font-size:14px;line-height:14px;color:#ff0000">后机柜门打开，请注意安全<b style="margin-left:1px">!</b></div>
<div class="a" style="left:1261px;top:857px;font-size:11.6px;line-height:13px;color:#000080;-webkit-text-stroke:0.2px #000080;font-family:'Liberation Mono',monospace">2023-2-28 18:09:29</div>
<div class="a" style="left:0;top:897px;width:1600px;height:1px;background:#fafafa"></div><div class="a" style="left:0;top:898px;width:1600px;height:1px;background:#404c58"></div>
<div class="a" style="left:0;top:899px;width:1600px;height:1px;background:#c6d9ee"></div>
</body></html>
